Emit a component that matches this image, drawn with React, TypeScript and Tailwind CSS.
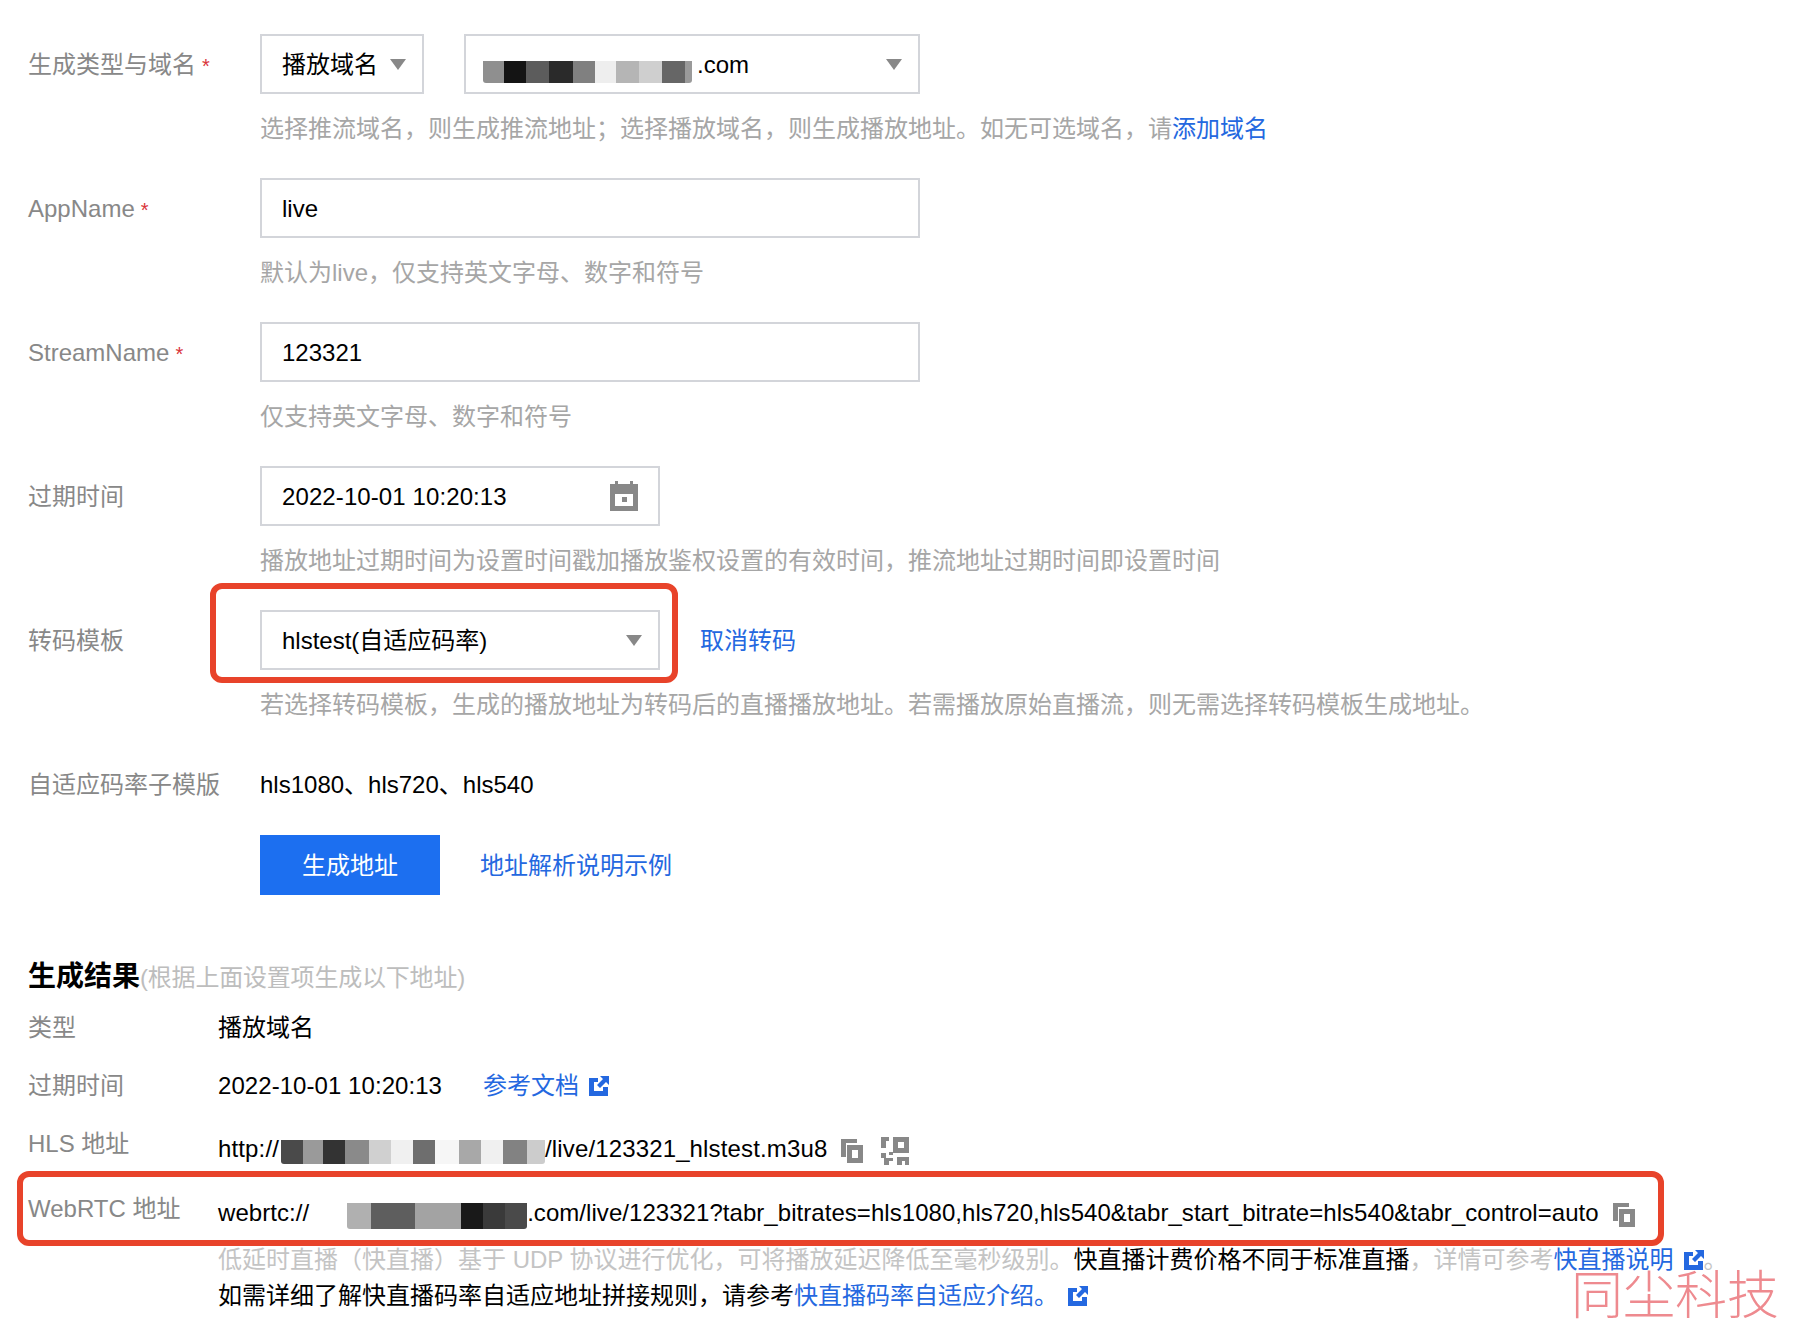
const cjk = "font-['Liberation_Sans','Noto_Sans_CJK_SC',sans-serif]";

function Caret() {
  return <span className="w-0 h-0 border-x-[8px] border-x-transparent border-t-[11px] border-t-[#888888] -mt-[2px]" />;
}

function Mosaic({ cells, h = 24 }: { cells: [number, string][]; h?: number }) {
  return (
    <span className="inline-flex align-middle rounded-b-[3px] overflow-hidden">
      {cells.map(([w, c], i) => (
        <span key={i} className="block" style={{ width: w, height: h, background: c }} />
      ))}
    </span>
  );
}

function ExternalIcon() {
  return (
    <svg width="20" height="20" viewBox="0 0 20 20" className="shrink-0">
      <path d="M0 2h9v4H5v9h9v-4h5v9H0z" fill="#2468e0" />
      <path d="M11 0h9v9l-3-3-6 6-3-3 6-6z" fill="#2468e0" />
    </svg>
  );
}

function CopyIcon() {
  return (
    <svg width="22" height="24" viewBox="0 0 22 24" className="shrink-0">
      <path d="M0 0h16v4H5v14H0z" fill="#888888" />
      <path fillRule="evenodd" d="M6 6h16v18H6zM11 11v8h6v-8z" fill="#888888" />
    </svg>
  );
}

function QrIcon() {
  return (
    <svg width="28" height="28" viewBox="0 0 28 28" className="shrink-0">
      <path
        fillRule="evenodd"
        fill="#888888"
        d="M0 0h8v4H5v7H0zM12 0h16v16H12zM17 5v6h6V5zM0 16h5v5H0zM3 21h9v3H8v4H3zM16 20h12v8h-4v-4h-3v4h-5zM8 15h4v3H8z"
      />
    </svg>
  );
}

function CalendarIcon() {
  return (
    <svg width="28" height="30" viewBox="0 0 28 30" className="shrink-0 -mt-[2px]">
      <path
        fillRule="evenodd"
        fill="#888888"
        d="M5 0h3v3h12V0h3v3h5v27H0V3h5zM5 13v12h18V13zM12 16h5v5h-5z"
      />
    </svg>
  );
}

function Select({ w, children, pr = "pr-[16px]" }: { w: string; children: React.ReactNode; pr?: string }) {
  return (
    <div className={`${w} h-[60px] border-2 border-[#d3d5da] flex items-center justify-between pt-[2px] pl-[20px] ${pr} text-black bg-white`}>
      {children}
    </div>
  );
}

function FormRow({ label, required, hint, children }: { label: string; required?: boolean; hint?: React.ReactNode; children: React.ReactNode }) {
  return (
    <div className="mb-[31px]">
      <div className="flex items-center h-[60px]">
        <div className="w-[260px] pl-[28px] pt-[2px] shrink-0 text-[#888888]">
          {label}
          {required && <span className="text-[#d9343b] ml-[6px] text-[20px]">*</span>}
        </div>
        {children}
      </div>
      {hint && <div className="ml-[260px] mt-[17px] h-[36px] leading-[36px] text-[#a6a6a6] whitespace-nowrap">{hint}</div>}
    </div>
  );
}

function ResultRow({ label, children, className, labelClass = "" }: { label: string; children: React.ReactNode; className: string; labelClass?: string }) {
  return (
    <div className={`flex items-center h-[36px] whitespace-nowrap ${className}`}>
      <div className={`w-[190px] shrink-0 text-[#888888] ${labelClass}`}>{label}</div>
      {children}
    </div>
  );
}

export default function App() {
  return (
    <div className={`relative w-[1796px] h-[1334px] overflow-hidden bg-white pt-[34px] text-[24px] ${cjk}`}>
      <FormRow
        label="生成类型与域名"
        required
        hint={
          <>
            选择推流域名，则生成推流地址；选择播放域名，则生成播放地址。如无可选域名，请
            <span className="text-[#2468e0]">添加域名</span>
          </>
        }
      >
        <Select w="w-[164px]">
          播放域名
          <Caret />
        </Select>
        <div className="w-[40px]" />
        <Select w="w-[456px]">
          <span className="flex items-center -ml-[3px]">
            <span className="flex mt-[14px]">
              <Mosaic
                h={22}
                cells={[
                  [21, "#8f8f8f"],
                  [22, "#141414"],
                  [23, "#5c5c5c"],
                  [24, "#2a2a2a"],
                  [22, "#808080"],
                  [21, "#eeeeee"],
                  [23, "#b5b5b5"],
                  [23, "#cfcfcf"],
                  [23, "#666666"],
                  [7, "#9a9a9a"],
                ]}
              />
            </span>
            <span className="ml-[5px]">.com</span>
          </span>
          <Caret />
        </Select>
      </FormRow>

      <FormRow label="AppName" required hint="默认为live，仅支持英文字母、数字和符号">
        <div className="w-[660px] h-[60px] border-2 border-[#d3d5da] flex items-center pt-[2px] pl-[20px] text-black">live</div>
      </FormRow>

      <FormRow label="StreamName" required hint="仅支持英文字母、数字和符号">
        <div className="w-[660px] h-[60px] border-2 border-[#d3d5da] flex items-center pt-[2px] pl-[20px] text-black">123321</div>
      </FormRow>

      <FormRow label="过期时间" hint="播放地址过期时间为设置时间戳加播放鉴权设置的有效时间，推流地址过期时间即设置时间">
        <Select w="w-[400px]" pr="pr-[20px]">
          <span className="tracking-[0.1px]">2022-10-01 10:20:13</span>
          <CalendarIcon />
        </Select>
      </FormRow>

      <FormRow label="转码模板" hint="若选择转码模板，生成的播放地址为转码后的直播播放地址。若需播放原始直播流，则无需选择转码模板生成地址。">
        <Select w="w-[400px]">
          hlstest(自适应码率)
          <Caret />
        </Select>
        <span className="ml-[40px] pt-[2px] text-[#2468e0]">取消转码</span>
      </FormRow>

      <div className="flex items-center h-[60px] mb-[21px]">
        <div className="w-[260px] pl-[28px] pt-[2px] shrink-0 text-[#888888]">自适应码率子模版</div>
        <span className="pt-[2px] text-black">hls1080、hls720、hls540</span>
      </div>

      <div className="flex items-center ml-[260px]">
        <div className="w-[180px] h-[60px] pt-[1px] bg-[#1c6ff0] text-white flex items-center justify-center">生成地址</div>
        <span className="ml-[40px] pt-[1px] text-[#2468e0]">地址解析说明示例</span>
      </div>

      <div className="mt-[62px] pl-[28px] flex items-baseline h-[40px]">
        <span className="text-[28px] font-bold text-black leading-[40px]">生成结果</span>
        <span className="text-[#bdbdbd] tracking-[-0.2px]">(根据上面设置项生成以下地址)</span>
      </div>

      <div className="pl-[28px] text-black">
        <ResultRow label="类型" className="mt-[13px]">
          播放域名
        </ResultRow>
        <ResultRow label="过期时间" className="mt-[22px]">
          <span className="tracking-[0.06px]">2022-10-01 10:20:13</span>
          <span className="ml-[41px] text-[#2468e0]">参考文档</span>
          <span className="ml-[10px]">
            <ExternalIcon />
          </span>
        </ResultRow>
        <ResultRow label="HLS 地址" labelClass="mb-[11px]" className="mt-[27px]">
          <span className="flex items-center tracking-[0.14px]">
            http://
            <span className="ml-[2px] flex mt-[5px]">
              <Mosaic
                cells={[
                  [22, "#4a4a4a"],
                  [20, "#9a9a9a"],
                  [22, "#333333"],
                  [24, "#8a8a8a"],
                  [22, "#d0d0d0"],
                  [22, "#f0f0f0"],
                  [22, "#6e6e6e"],
                  [24, "#f6f6f6"],
                  [22, "#a8a8a8"],
                  [22, "#f0f0f0"],
                  [24, "#828282"],
                  [18, "#cccccc"],
                ]}
              />
            </span>
            /live/123321_hlstest.m3u8
          </span>
          <span className="ml-[14px] mt-[4px]">
            <CopyIcon />
          </span>
          <span className="ml-[18px] mt-[4px]">
            <QrIcon />
          </span>
        </ResultRow>
        <ResultRow label="WebRTC 地址" labelClass="mb-[9px]" className="mt-[28px]">
          <span className="flex items-center tracking-[0.05px]">
            webrtc://
            <span className="w-[38px]" />
            <span className="flex mt-[6px]">
              <Mosaic
                h={26}
                cells={[
                  [24, "#b0b0b0"],
                  [44, "#5e5e5e"],
                  [46, "#a3a3a3"],
                  [22, "#191919"],
                  [22, "#3a3a3a"],
                  [22, "#4a4a4a"],
                ]}
              />
            </span>
            .com/live/123321?tabr_bitrates=hls1080,hls720,hls540&amp;tabr_start_bitrate=hls540&amp;tabr_control=auto
          </span>
          <span className="ml-[14px] mt-[4px]">
            <CopyIcon />
          </span>
        </ResultRow>
        <div className="ml-[190px] mt-[11px] flex items-center h-[36px] whitespace-nowrap text-[#c4c4c4]">
          低延时直播（快直播）基于 UDP 协议进行优化，可将播放延迟降低至毫秒级别。
          <span className="text-black">快直播计费价格不同于标准直播</span>，详情可参考
          <span className="text-[#2468e0]">快直播说明</span>
          <span className="ml-[10px]">
            <ExternalIcon />
          </span>
          。
        </div>
        <div className="ml-[190px] flex items-center h-[36px] whitespace-nowrap">
          如需详细了解快直播码率自适应地址拼接规则，请参考
          <span className="text-[#2468e0]">快直播码率自适应介绍。</span>
          <span className="ml-[10px]">
            <ExternalIcon />
          </span>
        </div>
      </div>

      {/* red annotation boxes drawn over the screenshot */}
      <div className="absolute left-[210px] top-[583px] w-[468px] h-[100px] border-[6px] border-[#e8432a] rounded-[12px]" />
      <div className="absolute left-[17px] top-[1171px] w-[1647px] h-[75px] border-[6px] border-[#e8432a] rounded-[12px]" />

      <div className="absolute left-[1571px] top-[1280px] text-[52px] leading-[32px] font-light text-[#ee8a8f] whitespace-nowrap">同尘科技</div>
    </div>
  );
}
